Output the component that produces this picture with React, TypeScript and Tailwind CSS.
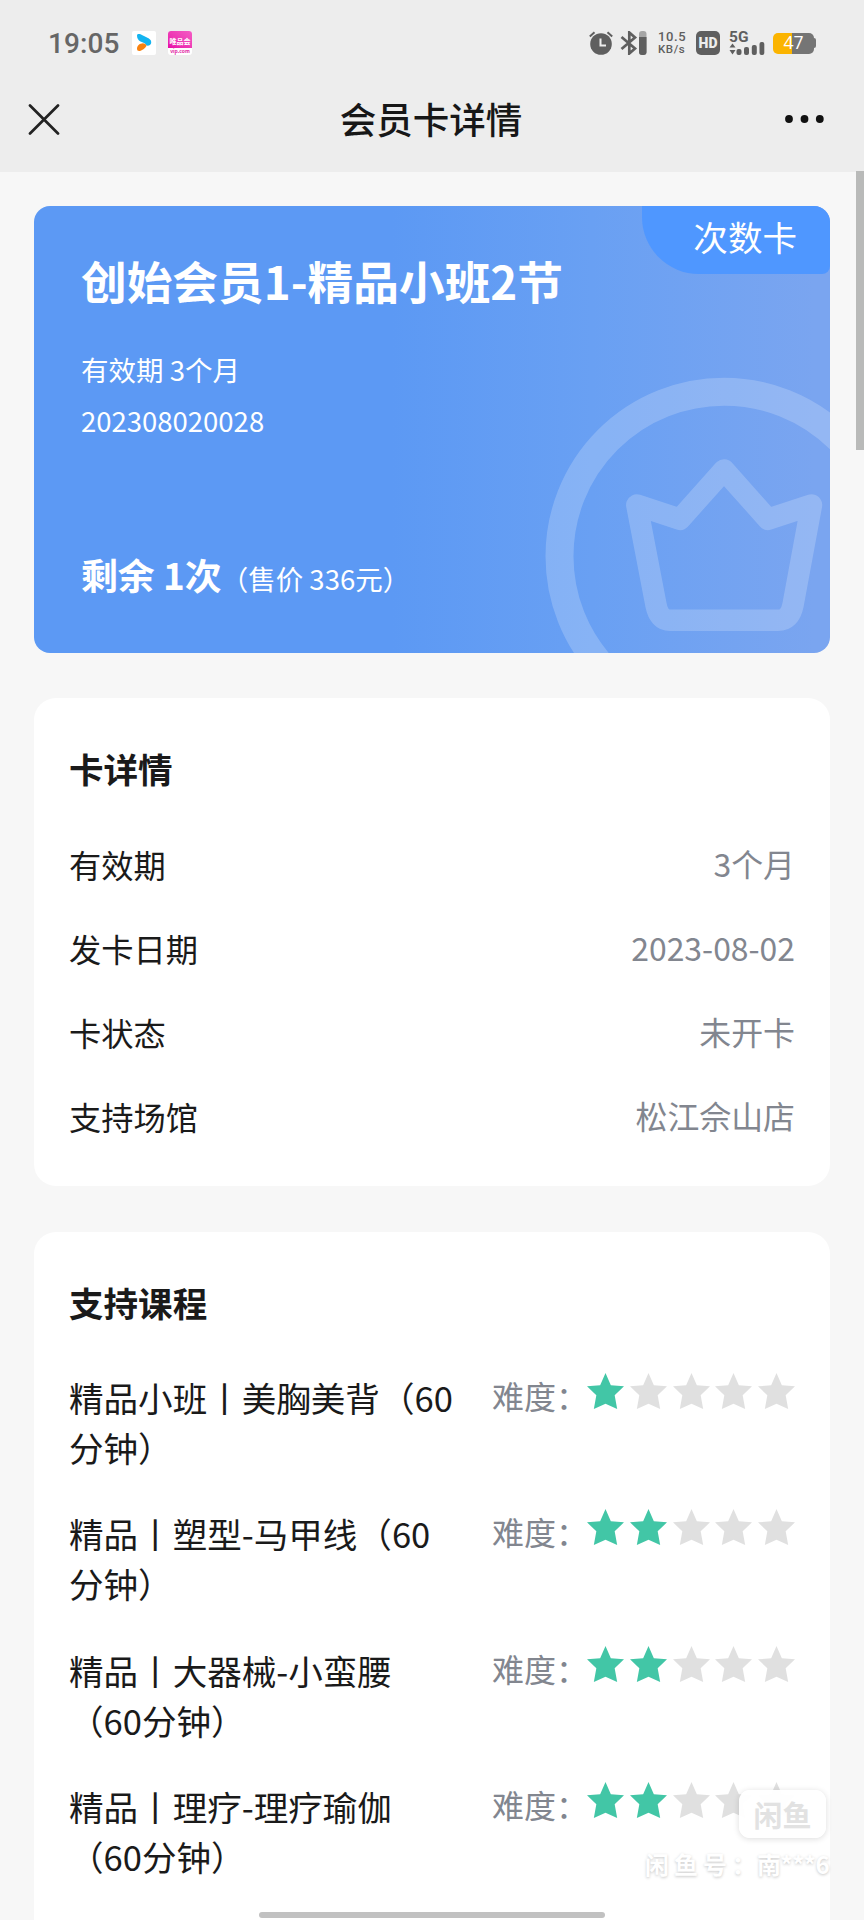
import { ReactNode } from "react";

const details = [
  { label: "有效期", value: "3个月" },
  { label: "发卡日期", value: "2023-08-02" },
  { label: "卡状态", value: "未开卡" },
  { label: "支持场馆", value: "松江佘山店" },
];

const courses = [
  { name: "精品小班丨美胸美背（60分钟）", level: 1 },
  { name: "精品丨塑型-马甲线（60分钟）", level: 2 },
  { name: "精品丨大器械-小蛮腰（60分钟）", level: 2 },
  { name: "精品丨理疗-理疗瑜伽（60分钟）", level: 2 },
];

function Star({ active }: { active: boolean }) {
  return (
    <svg
      viewBox="0 0 111 108"
      preserveAspectRatio="none"
      className={active ? "h-9 w-[37px] fill-[#42c6a6]" : "h-9 w-[37px] fill-[#e0e0e0]"}
    >
      <path d="M55.500 0 71.500 37 111 40 83 67 90.500 108 55.500 92 20.500 108 28 67 0 40 39.500 37Z" />
    </svg>
  );
}

function StatusBar() {
  return (
    <div className="flex h-[86px] items-center justify-between pr-12 pl-12 text-[#5f5f5f]">
      <div className="flex items-center">
        <span className="w-[84px] pt-[1px] font-['Roboto',sans-serif] text-[28px] leading-none font-medium tracking-[0.1px] text-[#666]">19:05</span>
        <svg width="24" height="24" viewBox="0 0 24 24">
          <rect width="24" height="24" rx="2" fill="#fff" />
          <path d="M5 4.500C5 2.800 7 2.800 8.500 3.200L14 6C18 8 19.500 9 19.200 12C19 14 16.500 15 14.500 14.500C13.500 12 11 11.600 8.500 10.500Q5 8.500 5 4.500Z" fill="#14b4f0" />
          <path d="M5 18C5 14 8 12.500 11 12.300Q14 12.600 14.600 14.800C13 17.500 10 19.500 8 20Q5 20.500 5 18Z" fill="#f9820f" />
        </svg>
        <div className="ml-3 flex h-6 w-6 flex-col overflow-hidden rounded-[3px] bg-white">
          <div className="flex h-[17px] items-center justify-center bg-gradient-to-tr from-[#e800a8] to-[#f45ac4] pt-[3px] text-[7px] leading-none font-bold text-white">
            唯品会
          </div>
          <div className="text-center text-[5px] leading-[6px] font-bold text-[#e0209f]">vip.com</div>
        </div>
      </div>
      <div className="flex h-6 items-center">
        <svg width="24" height="24" viewBox="0 0 24 24" className="fill-current">
          <circle cx="12" cy="13" r="10.800" />
          <path d="M.8 5.500 5.500 1.300M18.500 1.300 23.200 5.500" stroke="currentColor" strokeWidth="2" />
          <path d="M11.500 7.500V14.500H17" fill="none" stroke="#ededed" strokeWidth="2" />
        </svg>
        <svg width="27" height="24" viewBox="0 0 27 24" className="ml-[7px]">
          <path d="M1.500 6 15 17.500 9.300 22.500V1.500L15 6.500 1.500 18" fill="none" stroke="currentColor" strokeWidth="2.700" />
          <rect x="19" width="7.500" height="24" rx="3" fill="#a5a5a5" />
          <path d="M19 6H26.500V21Q26.500 24 23.500 24H22Q19 24 19 21Z" fill="currentColor" />
        </svg>
        <div className="ml-[11px] w-7 font-['Roboto',sans-serif] text-[13px] leading-[13px] font-medium tracking-[0.6px] whitespace-nowrap">
          <div>10.5</div>
          <div className="text-[11.500px]">KB/s</div>
        </div>
        <div className="ml-[10px] flex h-6 w-6 items-center justify-center rounded-[5px] bg-[#5f5f5f] font-['Roboto',sans-serif] text-[14px] leading-none font-black text-[#ededed]">
          HD
        </div>
        <div className="ml-[9px] flex h-6 w-9 flex-col justify-between">
          <span className="h-3 font-['Roboto',sans-serif] text-[15.500px] leading-[12px] font-bold">5G</span>
          <svg width="36" height="13" viewBox="0 0 36 13" className="-mt-[1px] shrink-0 fill-current">
            <path d="M3.500 1.500 6.500 5.500H.5ZM.5 8H6.500L3.500 12.500Z" />
            <rect x="7.500" y="7" width="5" height="6" rx="2" />
            <rect x="15" y="5" width="5" height="8" rx="2" />
            <rect x="22.800" y="3" width="5" height="10" rx="2" />
            <rect x="30.500" y="0" width="4.800" height="13" rx="2" />
          </svg>
        </div>
        <div className="ml-[8px] flex items-center">
          <div className="flex h-[21px] w-[41px] items-center justify-center rounded-[5px] bg-linear-[90deg,#fbb400_47%,#757575_47%] font-['Open_Sans',sans-serif] text-[17.500px] leading-none text-white">
            47
          </div>
          <div className="h-[10px] w-[2px] rounded-r-sm bg-[#757575]" />
        </div>
      </div>
    </div>
  );
}

function NavBar() {
  return (
    <div className="flex h-[66px] items-center justify-between pr-[40px] pl-7">
      <svg width="32" height="32" viewBox="0 0 32 32">
        <path d="M2 2.500 30 30.500M30 2.500 2 30.500" stroke="#222" strokeWidth="2.700" strokeLinecap="round" />
      </svg>
      <h1 className="ml-[17px] text-[36.500px] leading-none font-medium text-[#171717]">会员卡详情</h1>
      <svg width="39" height="8" viewBox="0 0 39 8" className="fill-[#111]">
        <circle cx="4" cy="4" r="3.900" />
        <circle cx="19.500" cy="4" r="3.900" />
        <circle cx="34.800" cy="4" r="3.900" />
      </svg>
    </div>
  );
}

function MemberCard() {
  return (
    <div className="relative h-[447px] overflow-hidden rounded-2xl bg-linear-[90deg,#5c99f4_0%,#5c99f4_45%,#69a0f3_70%,#7aa5f0_98%] px-[47px] pt-[41px] text-white">
      {/* crown watermark */}
      <svg className="absolute top-0 right-0" width="310" height="447" viewBox="520 206 310 447" fill="none" stroke="#fff" strokeOpacity="0.2">
        <circle cx="724" cy="556.200" r="164.500" strokeWidth="28" />
        <path
          d="M724 470 680 519.300 636.800 505 656 605Q659 620.300 670 620.300H778Q790 620.300 793 605L811.500 505 768 519.300Z"
          strokeWidth="21.500"
          strokeLinejoin="round"
        />
      </svg>
      <div className="absolute top-0 right-0 flex h-[67.500px] w-[188px] justify-end rounded-br-lg rounded-bl-[57px] bg-[#4f97ff] pt-[5px] pr-[33px] text-[34.560px] leading-[50px]">
        次数卡
      </div>
      <h2 className="text-[45.700px] leading-[67px] font-bold">创始会员1-精品小班2节</h2>
      <p className="mt-[35px] text-[27.500px] leading-[40px]">有效期 3个月</p>
      <p className="mt-[11px] text-[27.500px] leading-[40px]">202308020028</p>
      <div className="mt-[107px] flex items-baseline">
        <span className="text-[36.860px] leading-[54px] font-bold">剩余 1次</span>
        <span className="-ml-[1px] text-[27.500px] leading-[40px]">（售价 336元）</span>
      </div>
    </div>
  );
}

function Panel({ title, children }: { title: string; children: ReactNode }) {
  return (
    <div className="rounded-[22px] bg-white px-[35px] pt-[45px]">
      <h3 className="text-[34.560px] leading-[50px] font-bold">{title}</h3>
      {children}
    </div>
  );
}

export default function App() {
  return (
    <div className="relative h-[1920px] w-[864px] overflow-hidden bg-[#f7f7f7] font-['Noto_Sans_CJK_SC',sans-serif] text-[#1a1a1a]">
      <div className="h-[172px] bg-[#ededed]">
        <StatusBar />
        <NavBar />
      </div>

      <div className="flex flex-col px-[34px] pt-[34px]">
        <MemberCard />

        <div className="mt-[45px]">
          <Panel title="卡详情">
            <div className="mt-[47px] flex flex-col gap-9 pb-[46px] text-[32.260px] leading-[48px]">
              {details.map((item) => (
                <div key={item.label} className="flex justify-between">
                  <span>{item.label}</span>
                  <span className="-mt-[1px] text-[31.900px] text-[#82868f]">{item.value}</span>
                </div>
              ))}
            </div>
          </Panel>
        </div>

        <div className="mt-[46px]">
          <Panel title="支持课程">
            <div className="mt-[45px] flex flex-col gap-[36.400px] pb-16">
              {courses.map((course) => (
                <div key={course.name} className="flex justify-between">
                  <p className="w-[390px] text-[34.560px] leading-[50px]">{course.name}</p>
                  <div className="flex items-start">
                    <span className="w-[95px] text-[32px] leading-[47px] whitespace-nowrap text-[#82868f]">难度：</span>
                    <div className="flex gap-[5.750px] pt-[1px]">
                      {[1, 2, 3, 4, 5].map((n) => (
                        <Star key={n} active={n <= course.level} />
                      ))}
                    </div>
                  </div>
                </div>
              ))}
            </div>
          </Panel>
        </div>
      </div>

      {/* scrollbar */}
      <div className="absolute top-[171px] right-0 h-[279px] w-2 bg-[#b9bab9]" />

      {/* watermark */}
      <div className="absolute top-[1790px] left-[739px] flex h-12 w-[87px] items-center justify-center rounded-[11px] bg-white/95 text-[29px] leading-none font-bold text-[#e2e2e2] shadow-[0_1px_6px_rgba(0,0,0,0.14)]">
        闲鱼
      </div>
      <div className="absolute top-[1846px] left-[645px] flex text-[24px] leading-9 font-bold whitespace-nowrap text-white [text-shadow:0_1px_3px_rgba(0,0,0,0.22)]">
        <span className="w-[112px] tracking-[5px]">闲鱼号：</span>
        <span className="tracking-[-0.500px]">南***6</span>
      </div>

      {/* home indicator */}
      <div className="absolute top-[1912px] left-[259px] h-[6px] w-[346px] rounded-full bg-[#c1c1c1]" />
    </div>
  );
}
